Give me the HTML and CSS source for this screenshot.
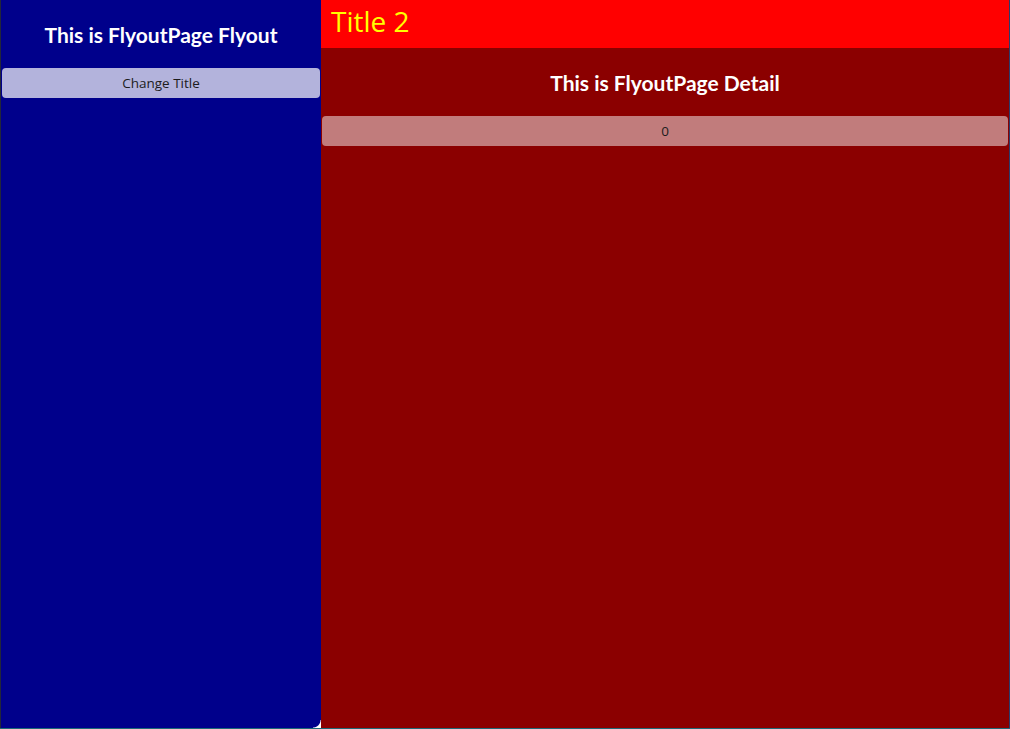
FILE: index.html
```html
<!DOCTYPE html>
<html>
<head>
<meta charset="utf-8">
<link rel="stylesheet" href="styles.css">
</head>
<body>
<div class="window">
  <div class="flyout">
    <div class="flyout-heading">This is FlyoutPage Flyout</div>
    <button class="btn btn-flyout">Change Title</button>
    <div class="corner"></div>
  </div>
  <div class="detail">
    <div class="titlebar">Title 2</div>
    <div class="detail-heading">This is FlyoutPage Detail</div>
    <button class="btn btn-detail">0</button>
  </div>
</div>
</body>
</html>
```
FILE: styles.css
```css
html, body {
  margin: 0;
  padding: 0;
  width: 1010px;
  height: 729px;
  overflow: hidden;
  background: #1c6a78;
}
.window {
  display: flex;
  height: 728px;
  width: 1010px;
  font-family: "Lato", "Open Sans", sans-serif;
}
.flyout {
  position: relative;
  width: 321px;
  box-sizing: border-box;
  border-left: 1px solid #22263a;
  background: #00008b;
  display: flex;
  flex-direction: column;
}
.flyout-heading {
  color: #fff;
  font-weight: bold;
  font-size: 21px;
  text-align: center;
  height: 68px;
  line-height: 70px;
}
.btn {
  border: none;
  border-radius: 4px;
  font-family: "Open Sans", sans-serif;
  font-size: 13.5px;
  color: #1c1c1c;
  padding: 0;
  display: block;
}
.btn-flyout {
  background: #b3b3dc;
  height: 30px;
  width: 318px;
  margin-left: 1px;
}
.corner {
  position: absolute;
  right: 0;
  bottom: 0;
  width: 8px;
  height: 8px;
  background: radial-gradient(circle at 0 0, transparent 7px, #ffffff 8px);
}
.detail {
  flex: 1;
  background: #8b0000;
  border-right: 1px solid #2b3b6b;
  display: flex;
  flex-direction: column;
}
.titlebar {
  background: #ff0000;
  color: #ffff00;
  height: 48px;
  line-height: 43px;
  font-size: 28px;
  padding-left: 10px;
  font-family: "Open Sans", sans-serif;
}
.detail-heading {
  color: #fff;
  font-weight: bold;
  font-size: 21px;
  text-align: center;
  height: 68px;
  line-height: 70px;
}
.btn-detail {
  background: #c17c7c;
  height: 30px;
  margin: 0 1px;
}
```
